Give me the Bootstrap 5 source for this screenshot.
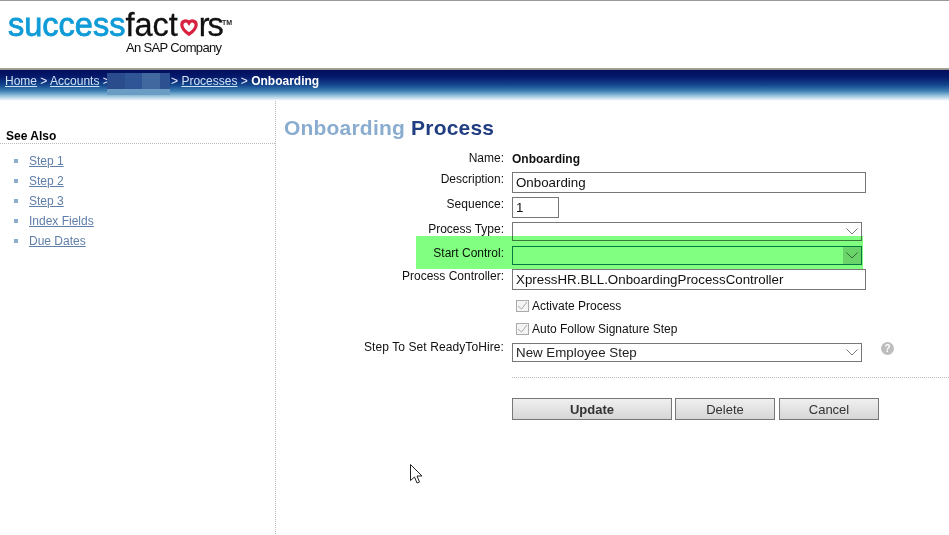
<!DOCTYPE html>
<html lang="en"><head><meta charset="utf-8"><title>Onboarding Process</title>
<link href="https://cdn.jsdelivr.net/npm/bootstrap@5.3.0/dist/css/bootstrap.min.css" rel="stylesheet">
<style>
html,body{height:535px;overflow:hidden}
body{font-family:"Liberation Sans",Arial,sans-serif;font-size:12px;color:#111;background:#fff;border-top:1px solid #999}
.logo-band{height:67px;padding:8px 0 0 8px}
.logo-main{font-size:32.5px;line-height:32px;height:32px;white-space:nowrap;display:flex;align-items:baseline}
.logo-blue{color:#0f9bd7;-webkit-text-stroke:.8px #0f9bd7}
.logo-black{color:#111;-webkit-text-stroke:.3px #111}
.logo-heart{width:18px;height:17px;margin:0 1px 0 2px;flex:none}
.logo-rs{letter-spacing:-2px}
.logo-tm{align-self:flex-start;font-size:7px;line-height:7px;margin-top:10px;font-weight:700;color:#222}
.logo-sub{font-size:13px;line-height:14px;padding-left:118px;letter-spacing:-.65px;color:#111}
.crumbs{height:33px;background:linear-gradient(#a9a9a0 0,#8f8f88 2px,#020e5c 2px,#06196b 9px,#13478e 17px,#3f7fb4 23px,#9cc6de 28px,#fff 33px);padding:6px 0 0 5px;color:#eef;font-size:12px;line-height:14px;white-space:nowrap}
.crumbs a{color:#cfe2f5}
.crumbs strong{color:#fff}
.blur-block{display:inline-block;width:63px;height:22px;vertical-align:-6px;margin:-4px -2px -4px -3px;background:linear-gradient(90deg,#2a4c8c 0 18px,#2f5596 18px 35px,#41689f 35px 53px,#2d5190 53px);border-bottom:6px solid #6a9cc4;box-sizing:border-box}
.page-cols{height:433px}
.side-col{width:276px;flex:none;border-right:1px dotted #bbb;padding-top:28px}
.side-head{font-weight:700;font-size:12px;line-height:14px;color:#000;padding:0 0 0 6px;border-bottom:1px dotted #bbb}
.side-list{list-style:none;margin:7px 0 0;padding:0 0 0 14px}
.side-list li{height:20px;line-height:20px;display:flex;align-items:center;gap:11px}
.side-list li::before{content:"";width:4px;height:4px;background:#8aaccf}
.side-list a{color:#5f7ea8}
.main-col{position:relative;flex:1;min-width:0}
.page-title{font-size:21px;font-weight:700;line-height:24px;margin:15px 0 0 8px;letter-spacing:.2px}
.title-a{color:#8aaccf}.title-b{color:#1f3d80}
.form-line{display:flex;gap:8px}
.form-lab{width:228px;flex:none;text-align:right;line-height:14px;padding-top:1px}
.step-lab{letter-spacing:.09px}
.form-fld{flex:none;line-height:14px}
.gap-t1{margin-top:1px}.gap-t2{margin-top:2px}.gap-t4{margin-top:4px}
.line-t2{margin-top:2px}.line-t3{margin-top:3px}.line-t4{margin-top:4px}.line-t5{margin-top:5px}.line-t9{margin-top:9px}.line-t10{margin-top:10px}
.in-box{display:block;height:21px;border:1px solid #777;border-radius:0;padding:0 3px;font:13.33px/19px "Liberation Sans",Arial,sans-serif;color:#111;background:#fff}
.in-wide{width:354px}
.in-num{width:47px}
.in-sel{display:block;width:350px;height:19px;border:1px solid #777;border-radius:0;padding:0 3px;font-size:13.33px;line-height:17px;color:#222;box-shadow:none;appearance:none;font-family:inherit;background:#fff url("data:image/svg+xml,%3Csvg xmlns='http://www.w3.org/2000/svg' width='18' height='17'%3E%3Cpath d='M3.500 5.500l5.500 5.500 5.500-5.500' fill='none' stroke='%23777' stroke-width='1'/%3E%3C/svg%3E") no-repeat right center;background-size:18px 17px}
.in-hover{background-color:#fff;background-image:url("data:image/svg+xml,%3Csvg xmlns='http://www.w3.org/2000/svg' width='18' height='17'%3E%3Crect width='18' height='17' fill='%23d4d4d4'/%3E%3Cpath d='M3.500 5.500l5.500 5.500 5.500-5.500' fill='none' stroke='%23666' stroke-width='1'/%3E%3C/svg%3E");border-color:#0a7a7a}
.chk-line{display:flex;align-items:center;gap:3px;height:14px;margin-left:4px}
.chk-box{appearance:none;width:13px;height:12px;margin:0;border:1px solid #aaa;flex:none;background:#f4f4f4 url("data:image/svg+xml,%3Csvg xmlns='http://www.w3.org/2000/svg' width='11' height='10'%3E%3Cpath d='M1 5l3.500 3 5.500-7' fill='none' stroke='%23aaa' stroke-width='1'/%3E%3C/svg%3E") no-repeat center}
.help-dot{width:13px;height:13px;border-radius:50%;background:#bdbdbd;color:#fff;font-size:10px;font-weight:700;line-height:13px;text-align:center;margin:-1px 0 0 19px}
.form-rule{margin:15px 0 0 236px;border-top:1px dotted #bbb}
.act-row{display:flex;gap:3px;margin:20px 0 0 236px}
.act-btn{height:22px;border:1px solid #777;border-radius:0;padding:1px 0 0;background:linear-gradient(#f0f0f0,#d6d6d6);font-size:13px;line-height:20px;color:#333;font-family:inherit}
.act-update{width:160px;font-weight:700}.act-delete{width:100px}.act-cancel{width:100px;margin-left:1px}
.green-wash{position:absolute;left:140px;top:135px;width:447px;height:33px;background:#80ff80;mix-blend-mode:multiply;pointer-events:none}
.mouse-ptr{position:absolute;left:134px;top:363px;width:13px;height:21px}
</style></head>
<body>
<div class="logo-band">
  <div class="logo-main"><span class="logo-blue">success</span><span class="logo-black">fact</span><svg class="logo-heart" viewBox="0 0 20 19" aria-hidden="true"><path d="M10 17C4 13 2 10 2 6.500a4.300 4.300 0 0 1 8-2.200 4.300 4.300 0 0 1 8 2.200C18 10 16 13 10 17z" fill="none" stroke="#d8203f" stroke-width="3.600"/></svg><span class="logo-black logo-rs">rs</span><span class="logo-tm">TM</span></div>
  <div class="logo-sub">An SAP Company</div>
</div>
<nav class="crumbs"><a href="#">Home</a> &gt; <a href="#">Accounts</a> &gt;<span class="blur-block"></span> &gt; <a href="#">Processes</a> &gt; <strong>Onboarding</strong></nav>
<div class="d-flex page-cols">
  <aside class="side-col">
    <div class="side-head">See Also</div>
    <ul class="side-list">
      <li><a href="#">Step 1</a></li><li><a href="#">Step 2</a></li><li><a href="#">Step 3</a></li><li><a href="#">Index Fields</a></li><li><a href="#">Due Dates</a></li>
    </ul>
  </aside>
  <main class="main-col">
    <h1 class="page-title"><span class="title-a">Onboarding</span> <span class="title-b">Process</span></h1>
    <div class="form-line line-t10"><div class="form-lab">Name:</div><div class="form-fld gap-t2 fw-bold">Onboarding</div></div>
    <div class="form-line line-t5"><div class="form-lab">Description:</div><div class="form-fld gap-t1"><input class="in-box in-wide" value="Onboarding"></div></div>
    <div class="form-line line-t3"><div class="form-lab">Sequence:</div><div class="form-fld gap-t1"><input class="in-box in-num" value="1"></div></div>
    <div class="form-line line-t3"><div class="form-lab">Process Type:</div><div class="form-fld gap-t1"><select class="in-sel form-select"></select></div></div>
    <div class="form-line line-t4"><div class="form-lab">Start Control:</div><div class="form-fld gap-t1"><select class="in-sel in-hover form-select"></select></div></div>
    <div class="form-line line-t3"><div class="form-lab">Process Controller:</div><div class="form-fld gap-t1"><input class="in-box in-wide" value="XpressHR.BLL.OnboardingProcessController"></div></div>
    <div class="form-line line-t9"><div class="form-lab"></div><label class="chk-line"><input type="checkbox" class="chk-box" checked disabled>Activate Process</label></div>
    <div class="form-line line-t9"><div class="form-lab"></div><label class="chk-line"><input type="checkbox" class="chk-box" checked disabled>Auto Follow Signature Step</label></div>
    <div class="form-line line-t3"><div class="form-lab step-lab">Step To Set ReadyToHire:</div><div class="form-fld gap-t4 d-flex"><select class="in-sel form-select"><option>New Employee Step</option></select><div class="help-dot">?</div></div></div>
    <div class="form-rule"></div>
    <div class="act-row"><button class="act-btn act-update">Update</button><button class="act-btn act-delete">Delete</button><button class="act-btn act-cancel">Cancel</button></div>
    <div class="green-wash"></div>
    <svg class="mouse-ptr" viewBox="0 0 13 21" aria-hidden="true"><path d="M.5.5v16l4-3.500 2.500 6 2.500-1-2.500-6h5z" fill="#fff" stroke="#222"/></svg>
  </main>
</div>
<script src="https://cdn.jsdelivr.net/npm/bootstrap@5.3.0/dist/js/bootstrap.bundle.min.js"></script>
</body></html>
